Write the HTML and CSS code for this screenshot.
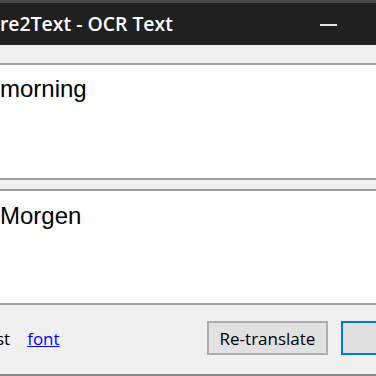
FILE: index.html
```html
<!DOCTYPE html>
<html lang="en">
<head>
    <meta charset="UTF-8">
    <title>Capture2Text - OCR Text</title>
    <link rel="stylesheet" href="styles.css">
</head>
<body>
    <div class="window">
        <div class="titlebar">
            <span class="title">re2Text - OCR Text</span>
            <span class="min-btn"><span class="min-line"></span></span>
        </div>
        <div class="strip"></div>
        <div class="edit edit-top">
            <p>morning</p>
        </div>
        <div class="splitter"></div>
        <div class="edit edit-bottom">
            <p>Morgen</p>
        </div>
        <div class="footer">
            <span class="opt">st</span>
            <a href="#" class="link">font</a>
            <span class="spacer"></span>
            <button type="button" class="btn">Re-translate</button>
            <button type="button" class="btn btn-default"></button>
        </div>
    </div>
</body>
</html>
```

FILE: styles.css
```css
html, body {
    margin: 0;
    padding: 0;
}
body {
    width: 376px;
    height: 376px;
    overflow: hidden;
    background-color: #f0f0f0;
}
.window {
    display: flex;
    flex-direction: column;
    height: 376px;
}
.titlebar {
    display: flex;
    align-items: center;
    height: 42px;
    border-top: 3px solid #444848;
    background-color: #202020;
    color: #ffffff;
}
.title {
    flex: 1;
    font-family: "Open Sans", sans-serif;
    font-weight: 600;
    font-size: 19.4px;
    margin-top: -1px;
    white-space: nowrap;
}
.min-btn {
    display: flex;
    width: 60px;
    justify-content: center;
    margin-right: 18px;
}
.min-line {
    display: block;
    width: 17px;
    height: 2px;
    margin-top: 1px;
    background-color: #e6e6e6;
}
.strip {
    height: 18px;
    background-color: #f0f0f0;
}
.edit {
    background-color: #ffffff;
    border-top: 2px solid #a0a0a0;
    border-bottom: 2px solid #a0a0a0;
    font-family: "Liberation Sans", Arial, sans-serif;
    font-size: 24px;
    color: #000000;
}
.edit p {
    margin: 0;
    padding: 10px 0 0 0;
    line-height: 28px;
}
.edit-top {
    height: 113px;
}
.splitter {
    height: 9px;
}
.edit-bottom {
    height: 112px;
}
.edit-bottom p {
    padding-top: 11px;
}
.footer {
    flex: 1;
    display: flex;
    align-items: center;
    border-bottom: 2px solid #8a8a8a;
    font-family: "Open Sans", sans-serif;
    font-size: 17px;
    padding-bottom: 3px;
}
.opt {
    margin-left: -4px;
    color: #000000;
}
.link {
    margin-left: 17px;
    color: #0000ff;
}
.spacer {
    flex: 1;
}
.btn {
    height: 34px;
    width: 121px;
    border: 2px solid #adadad;
    background-color: #e1e1e1;
    font-family: "Open Sans", sans-serif;
    font-size: 17px;
    color: #000000;
    padding: 0;
}
.btn-default {
    width: 40px;
    margin-left: 13px;
    margin-right: -5px;
    border-color: #0078d7;
}
```
